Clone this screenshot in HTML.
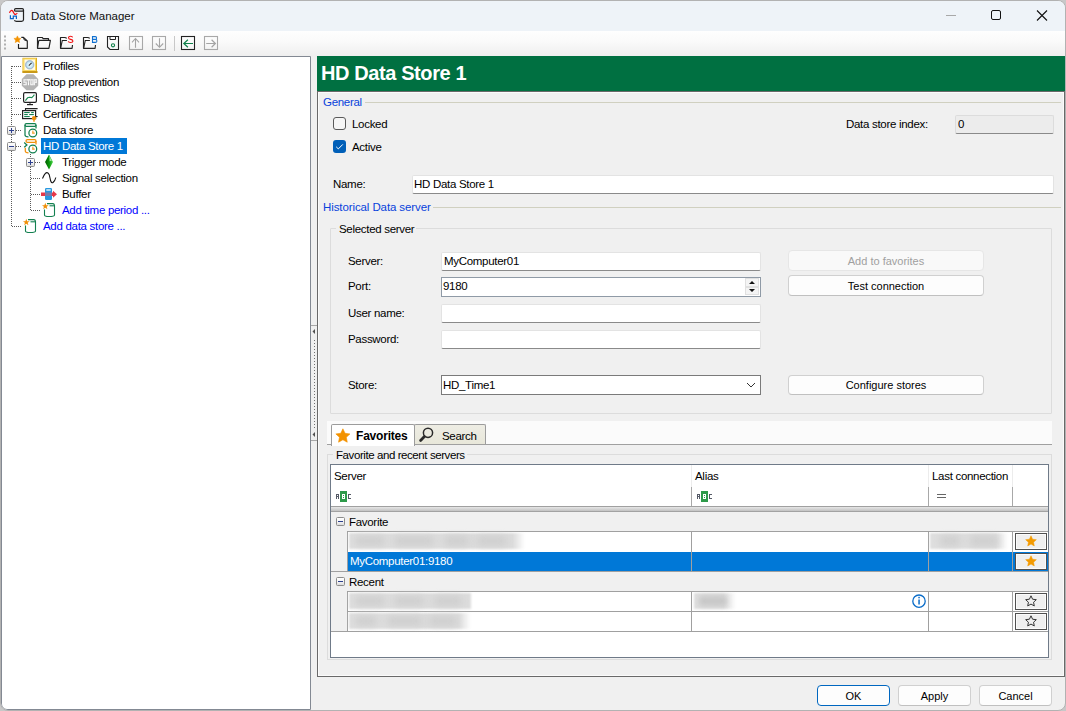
<!DOCTYPE html>
<html><head><meta charset="utf-8">
<style>
*{box-sizing:border-box;margin:0;padding:0}
html,body{width:1066px;height:711px;overflow:hidden;background:#c8c8c8}
body{font-family:"Liberation Sans",sans-serif;font-size:11px;color:#000;position:relative}
.a{position:absolute}
svg{position:absolute;overflow:visible}
.t{position:absolute;white-space:nowrap;line-height:13px;font-size:11.5px;letter-spacing:-0.3px}
#win{position:absolute;left:0;top:0;width:1066px;height:711px;border:1px solid #b2b2b2;border-radius:8px;background:#f0f0f0;overflow:hidden}
#title{position:absolute;left:0;top:0;width:1064px;height:30px;background:#eef3f8}
#tb{position:absolute;left:0;top:30px;width:1064px;height:26px;background:linear-gradient(#fefefe,#fafafa 40%,#eeeeee)}
#tree{position:absolute;left:0;top:55px;width:310px;height:654px;background:#fff;border:1px solid #838993;border-radius:0 0 0 6px}
#green{position:absolute;left:316px;top:55px;width:748px;height:35px;background:#007041}
#rp{position:absolute;left:316px;top:90px;width:748px;height:586px;border:1px solid #696969;box-shadow:inset 0 0 0 1px #fbfbfb;background:#f0f0f0}
.tbx{position:absolute;background:#fff;border:1px solid #e3e3e3;border-bottom:1px solid #8a8a8a;border-radius:2px}
.btn{position:absolute;background:#fdfdfd;border:1px solid #d0d0d0;border-bottom-color:#c0c0c0;border-radius:4px;text-align:center;line-height:18px;font-size:11px}
.glbl{color:#0842dc}
.gline{position:absolute;height:1px;background:#d0d0c0}
</style></head>
<body>
<div id="win">
  <div id="title"></div>
  <div id="tb"></div>
  <div id="tree"></div>
  <div id="green"></div>
  <div id="rp"></div>
</div>
<!--TITLE-->
<svg style="left:0;top:0" width="1066" height="60">
  <!-- app icon -->
  <path d="M15.8 8.6 L22.2 8.6 Q23.5 8.6 23.5 9.9 Q23.5 11.2 22.2 11.2 L15.8 11.2 Q14.5 11.2 14.5 9.9 Q14.5 8.6 15.8 8.6 Z" fill="none" stroke="#222" stroke-width="1.2"/>
  <path d="M23.5 9.9 L23.5 19.8 Q23.5 21.3 21.5 21.3 L16.5 21.3 Q15 21.3 14.3 20.4" fill="none" stroke="#222" stroke-width="1.2"/>
  <path d="M9.4 12.8 Q10.6 10.2 11.8 10.4 Q12.8 10.6 13.8 13 Q14.6 14.8 15.6 14.4 Q16.5 14 17.3 13.2" fill="none" stroke="#f01010" stroke-width="1.2"/>
  <path d="M10.4 15.2 L10.4 18.7 L13.3 18.7 L13.3 16.2 L16.4 16.2 L16.4 18.9" fill="none" stroke="#0a64c8" stroke-width="1.2"/>
  <!-- window controls -->
  <rect x="946" y="15" width="10" height="1" fill="#a8a8a8"/>
  <rect x="991.5" y="10.5" width="9" height="9" rx="1.5" fill="none" stroke="#111" stroke-width="1"/>
  <path d="M1037 10.5 L1047 20.5 M1047 10.5 L1037 20.5" stroke="#111" stroke-width="1.1"/>
  <!-- toolbar grip -->
  <g fill="#b0b0b0"><rect x="4" y="35.5" width="2" height="2"/><rect x="4" y="39.5" width="2" height="2"/><rect x="4" y="43.5" width="2" height="2"/><rect x="4" y="47.5" width="2" height="2"/></g>
  <!-- new -->
  <path d="M18.5 44 L18.5 48.3 L27.3 48.3 L27.3 41 L23.5 37.3 L21.3 37.3" fill="none" stroke="#222" stroke-width="1.15" stroke-linejoin="round"/>
  <path d="M23.5 37.5 Q23.3 40.8 27 40.8" fill="none" stroke="#222" stroke-width="1"/>
  <path d="M17.40 35.90 L18.46 38.14 L20.92 38.45 L19.11 40.16 L19.58 42.59 L17.40 41.40 L15.22 42.59 L15.69 40.16 L13.88 38.45 L16.34 38.14 Z" fill="#f39200" stroke="#f39200" stroke-width="0.5" stroke-linejoin="round"/>
  <!-- open -->
  <path d="M38.8 40.3 L37.5 48.3 L37.5 37.5 L42.2 37.5 L43.2 38.6 L48.5 38.6 L48.5 40.2" fill="none" stroke="#222" stroke-width="1.15" stroke-linejoin="round"/>
  <path d="M38.9 40.3 L50.4 40.3 L48.9 48.3 L37.5 48.3" fill="none" stroke="#222" stroke-width="1.15" stroke-linejoin="round"/>
  <!-- folder S -->
  <path d="M66.6 38.5 Q66.3 37.5 64.5 37.5 L60.5 37.5 L60.5 48.3 L72.1 48.3 L72.5 45" fill="none" stroke="#222" stroke-width="1.15" stroke-linejoin="round"/>
  <path d="M66.9 40.5 L62.3 40.5 L60.7 47.8" fill="none" stroke="#222" stroke-width="1.1"/>
  <path d="M72.6 37.4 Q72.4 36.3 70.6 36.3 Q68.5 36.3 68.5 37.8 Q68.5 39.1 70.7 39.4 Q72.9 39.7 72.9 41.1 Q72.9 42.5 70.6 42.5 Q68.4 42.5 68.3 41.2" fill="none" stroke="#f01010" stroke-width="1.1"/>
  <!-- folder B -->
  <path d="M89.6 38.5 Q89.3 37.5 87.5 37.5 L83.5 37.5 L83.5 48.3 L95.1 48.3 L95.5 45" fill="none" stroke="#222" stroke-width="1.15" stroke-linejoin="round"/>
  <path d="M89.9 40.5 L85.3 40.5 L83.7 47.8" fill="none" stroke="#222" stroke-width="1.1"/>
  <path d="M92.5 36.6 L95.3 36.6 Q96.6 36.6 96.6 38 Q96.6 39.4 95.3 39.4 L92.5 39.4 M95.3 39.4 Q96.9 39.4 96.9 41 Q96.9 42.4 95.3 42.4 L92.5 42.4 L92.5 36.1" fill="none" stroke="#1070d0" stroke-width="1.1"/>
  <!-- save -->
  <path d="M107.5 36.5 L118.5 36.5 L118.5 49.5 L110 49.5 L107.5 47 Z" fill="none" stroke="#222" stroke-width="1.1"/>
  <path d="M110 36.5 L110 39.5 L115.5 39.5 L115.5 36.5" fill="none" stroke="#222" stroke-width="1"/>
  <circle cx="113" cy="45.3" r="1.6" fill="none" stroke="#10804a" stroke-width="1.1"/>
  <!-- up / down -->
  <rect x="129.5" y="36.5" width="13" height="13" fill="none" stroke="#a8a8a8" stroke-width="1.1"/>
  <path d="M135.5 38.5 L135.5 47.7 M132 42.3 L135.5 38.5 L139 42.3" fill="none" stroke="#a4a4a4" stroke-width="1.1"/>
  <rect x="152.5" y="36.5" width="13" height="13" fill="none" stroke="#a8a8a8" stroke-width="1.1"/>
  <path d="M159.5 38.2 L159.5 47.5 M155.8 43.5 L159.5 47.3 L163.2 43.5" fill="none" stroke="#a4a4a4" stroke-width="1.1"/>
  <rect x="174" y="36" width="1" height="15" fill="#c8c8c8"/>
  <rect x="181.5" y="36.5" width="13" height="13" fill="none" stroke="#222" stroke-width="1.1"/>
  <path d="M183.6 43.5 L193 43.5 M187.9 39.8 L183.8 43.5 L187.9 47.2" fill="none" stroke="#10804a" stroke-width="1.2"/>
  <rect x="204.5" y="36.5" width="13" height="13" fill="none" stroke="#a8a8a8" stroke-width="1.1"/>
  <path d="M206.2 43.5 L215.4 43.5 M211.6 39.8 L215.4 43.5 L211.6 47.2" fill="none" stroke="#a4a4a4" stroke-width="1.2"/>
</svg>
<div class="t" style="left:31px;top:9px;font-size:11.5px;line-height:14px;color:#111;letter-spacing:0">Data Store Manager</div>
<div class="t" style="left:321px;top:62px;font-size:20px;line-height:22px;font-weight:bold;color:#fff;letter-spacing:-0.4px">HD Data Store 1</div>
<!--TREE-->
<svg style="left:0;top:0" width="320" height="240">
  <g stroke="#5a5a5a" stroke-width="1" stroke-dasharray="1,1" fill="none">
    <path d="M11.5 66 L11.5 126 M11.5 135 L11.5 142 M11.5 151 L11.5 226.5"/>
    <path d="M12 66.5 L22 66.5 M12 82.5 L22 82.5 M12 98.5 L22 98.5 M12 114.5 L22 114.5 M16 130.5 L22 130.5 M16 146.5 L22 146.5 M12 226.5 L22 226.5"/>
    <path d="M30.5 154 L30.5 158 M30.5 167 L30.5 210.5"/>
    <path d="M35 162.5 L41 162.5 M31 178.5 L41 178.5 M31 194.5 L41 194.5 M31 210.5 L41 210.5"/>
  </g>
  <!-- expander boxes -->
  <defs><linearGradient id="eg" x1="0" y1="0" x2="0" y2="1"><stop offset="0" stop-color="#fff"/><stop offset="0.5" stop-color="#f4f4f4"/><stop offset="1" stop-color="#d8d8d8"/></linearGradient></defs>
  <g stroke="#8c8c8c" fill="url(#eg)">
    <rect x="7.5" y="126.5" width="8" height="8" rx="1"/>
    <rect x="7.5" y="142.5" width="8" height="8" rx="1"/>
    <rect x="26.5" y="158.5" width="8" height="8" rx="1"/>
  </g>
  <g stroke="#2d3f8e" stroke-width="1">
    <path d="M9 130.5 L14 130.5 M11.5 128 L11.5 133"/>
    <path d="M9 146.5 L14 146.5"/>
    <path d="M28 162.5 L33 162.5 M30.5 160 L30.5 165"/>
  </g>
  <!-- Profiles icon -->
  <defs><linearGradient id="gold" x1="0" y1="0" x2="1" y2="1"><stop offset="0" stop-color="#e8c040"/><stop offset="1" stop-color="#c89a10"/></linearGradient>
  <radialGradient id="dial"><stop offset="0" stop-color="#ffffff"/><stop offset="0.7" stop-color="#bfe4f4"/><stop offset="1" stop-color="#8aa6c4"/></radialGradient></defs>
  <rect x="22.5" y="57.8" width="14.5" height="15" fill="#e0b020"/>
  <rect x="23" y="58.3" width="13" height="13.5" fill="#f8d860"/>
  <rect x="24.5" y="59.5" width="10.5" height="10.5" fill="#fffbe8"/>
  <rect x="22.5" y="71" width="15" height="2" fill="#c89818"/>
  <circle cx="29.7" cy="64.8" r="4.3" fill="url(#dial)" stroke="#a8b4c8" stroke-width="0.7"/>
  <path d="M28.8 65.6 L31.6 62.9" stroke="#333" stroke-width="1.1"/>
  <!-- Stop icon -->
  <path d="M26.5 74.3 L33.5 74.3 L38.2 79 L38.2 85.8 L33.5 90.3 L26.5 90.3 L21.8 85.8 L21.8 79 Z" fill="#b4b4b4"/>
  <g fill="#fff"><rect x="23.50" y="79.20" width="1.1" height="1.25"/><rect x="24.55" y="79.20" width="1.1" height="1.25"/><rect x="25.60" y="79.20" width="1.1" height="1.25"/><rect x="23.50" y="80.40" width="1.1" height="1.25"/><rect x="23.50" y="81.60" width="1.1" height="1.25"/><rect x="24.55" y="81.60" width="1.1" height="1.25"/><rect x="25.60" y="81.60" width="1.1" height="1.25"/><rect x="25.60" y="82.80" width="1.1" height="1.25"/><rect x="23.50" y="84.00" width="1.1" height="1.25"/><rect x="24.55" y="84.00" width="1.1" height="1.25"/><rect x="25.60" y="84.00" width="1.1" height="1.25"/><rect x="26.90" y="79.20" width="1.1" height="1.25"/><rect x="27.95" y="79.20" width="1.1" height="1.25"/><rect x="29.00" y="79.20" width="1.1" height="1.25"/><rect x="27.95" y="80.40" width="1.1" height="1.25"/><rect x="27.95" y="81.60" width="1.1" height="1.25"/><rect x="27.95" y="82.80" width="1.1" height="1.25"/><rect x="27.95" y="84.00" width="1.1" height="1.25"/><rect x="30.30" y="79.20" width="1.1" height="1.25"/><rect x="31.35" y="79.20" width="1.1" height="1.25"/><rect x="32.40" y="79.20" width="1.1" height="1.25"/><rect x="30.30" y="80.40" width="1.1" height="1.25"/><rect x="32.40" y="80.40" width="1.1" height="1.25"/><rect x="30.30" y="81.60" width="1.1" height="1.25"/><rect x="32.40" y="81.60" width="1.1" height="1.25"/><rect x="30.30" y="82.80" width="1.1" height="1.25"/><rect x="32.40" y="82.80" width="1.1" height="1.25"/><rect x="30.30" y="84.00" width="1.1" height="1.25"/><rect x="31.35" y="84.00" width="1.1" height="1.25"/><rect x="32.40" y="84.00" width="1.1" height="1.25"/><rect x="33.70" y="79.20" width="1.1" height="1.25"/><rect x="34.75" y="79.20" width="1.1" height="1.25"/><rect x="35.80" y="79.20" width="1.1" height="1.25"/><rect x="33.70" y="80.40" width="1.1" height="1.25"/><rect x="35.80" y="80.40" width="1.1" height="1.25"/><rect x="33.70" y="81.60" width="1.1" height="1.25"/><rect x="34.75" y="81.60" width="1.1" height="1.25"/><rect x="35.80" y="81.60" width="1.1" height="1.25"/><rect x="33.70" y="82.80" width="1.1" height="1.25"/><rect x="33.70" y="84.00" width="1.1" height="1.25"/></g>
  <!-- Diagnostics icon -->
  <rect x="23.6" y="92.6" width="12.8" height="9.8" rx="1.4" fill="#fff" stroke="#222" stroke-width="1.2"/>
  <rect x="29.5" y="103" width="1" height="1.5" fill="#222"/>
  <rect x="27" y="104" width="6" height="1.2" fill="#222"/>
  <path d="M25.4 100.6 L27.6 97.8 L29.5 97.2 L31.8 97.6 L33 96.5 L34.4 94.6" fill="none" stroke="#1a8a50" stroke-width="1.1"/>
  <!-- Certificates icon -->
  <path d="M25.5 110.5 L25.5 108.6 L37.6 108.6" fill="none" stroke="#222" stroke-width="1.1"/>
  <rect x="22.6" y="110.6" width="13" height="8" fill="#fff" stroke="#222" stroke-width="1.2"/>
  <g fill="#138050"><rect x="24.2" y="112" width="5.5" height="1.1"/><rect x="31.2" y="112" width="2.6" height="1.1"/><rect x="24.2" y="114" width="3.6" height="1.1"/><rect x="29.2" y="114" width="4.6" height="1.1"/><rect x="24.2" y="116" width="5.5" height="1.1"/></g>
  <rect x="35.6" y="116" width="2" height="1.1" fill="#222"/>
  <circle cx="34" cy="118.2" r="2.1" fill="#f0900a"/><path d="M34 119 L34 121.8" stroke="#f0900a" stroke-width="1.4"/>
  <!-- Data store icon -->
  <g fill="none" stroke="#138050" stroke-width="1.25">
    <rect x="25" y="123.6" width="11" height="2.8" rx="1.4" ry="1.4"/>
    <path d="M36 125 L36 128.5"/>
    <path d="M25 125 L25 135 Q25 136.8 28.5 136.8"/>
    <circle cx="32.8" cy="133" r="3.9" fill="#fff"/>
  </g>
  <rect x="32.4" y="130.6" width="1" height="3" fill="#f0900a"/><rect x="32.4" y="132.6" width="2.4" height="1" fill="#f0900a"/>
  <!-- HD Data Store icon -->
  <g fill="none" stroke="#f0900a" stroke-width="1.25">
    <rect x="26" y="139.6" width="10" height="2.8" rx="1.4" ry="1.4"/>
    <path d="M36 141 L36 144.5"/>
    <path d="M25.3 147.8 L25.3 151 Q25.3 152.8 28.5 152.8"/>
  </g>
  <path d="M24.2 142.6 L26.9 144.9 L24.2 147.2" fill="none" stroke="#138050" stroke-width="1.25"/>
  <circle cx="32.8" cy="149" r="3.9" fill="#fff" stroke="#138050" stroke-width="1.25"/>
  <rect x="32.4" y="146.6" width="1" height="3" fill="#f0900a"/><rect x="32.4" y="148.6" width="2.4" height="1" fill="#f0900a"/>
  <!-- Trigger gem -->
  <defs><linearGradient id="gem" x1="0" y1="0" x2="1" y2="0"><stop offset="0" stop-color="#005a00"/><stop offset="0.55" stop-color="#0c9a0c"/><stop offset="1" stop-color="#50d850"/></linearGradient></defs>
  <path d="M49 154.5 L53 162 L49 169.5 L45 162 Z" fill="url(#gem)"/>
  <path d="M49.3 155.5 L51.8 160.8 L49.6 161.2 Z" fill="#c0f8c0" opacity="0.8"/>
  <!-- Signal sine -->
  <path d="M42.5 178.5 Q45.5 171 48 173 Q49.5 174 50 178 Q51 184 53 182.5 Q55 181 55.8 177.5" fill="none" stroke="#111" stroke-width="1.1"/>
  <!-- Buffer -->
  <rect x="45" y="188" width="7" height="12" rx="1.2" fill="#2898e0"/>
  <rect x="46.3" y="189.2" width="4.4" height="1.6" fill="#d8ecf8"/>
  <rect x="41" y="192.5" width="4" height="3.5" fill="#e83848"/>
  <rect x="45" y="192.5" width="7" height="3.5" fill="#7a7aa8"/>
  <path d="M52 192.5 L53 192.5 L53 190.8 L57 194.3 L53 197.8 L53 196 L52 196 Z" fill="#e83848"/>
  <!-- Add time period -->
  <g fill="none" stroke="#138050" stroke-width="1.1">
    <path d="M47 203.6 L53 203.6 Q54.5 203.8 54.5 205.5 L54.5 215 Q54.5 216.5 49 216.5 Q44.5 216.5 44.5 215 L44.5 209.5"/>
    <path d="M49.5 205.8 L54 205.8"/>
  </g>
  <path d="M45.3 202.8 L46.2 205.2 L48.6 205.3 L46.7 206.8 L47.4 209.2 L45.3 207.8 L43.2 209.2 L43.9 206.8 L42 205.3 L44.4 205.2 Z" fill="#f0900a"/>
  <!-- Add data store -->
  <g fill="none" stroke="#138050" stroke-width="1.1">
    <path d="M28 219.6 L34 219.6 Q35.5 219.8 35.5 221.5 L35.5 231 Q35.5 232.5 30 232.5 Q25.5 232.5 25.5 231 L25.5 225.5"/>
    <path d="M30.5 221.8 L35 221.8"/>
  </g>
  <path d="M26.3 218.8 L27.2 221.2 L29.6 221.3 L27.7 222.8 L28.4 225.2 L26.3 223.8 L24.2 225.2 L24.9 222.8 L23 221.3 L25.4 221.2 Z" fill="#f0900a"/>
</svg>
<div class="a" style="left:41px;top:138px;width:86px;height:16px;background:#0078d7"></div>
<div class="t" style="left:43px;top:60px">Profiles</div>
<div class="t" style="left:43px;top:76px">Stop prevention</div>
<div class="t" style="left:43px;top:92px">Diagnostics</div>
<div class="t" style="left:43px;top:108px">Certificates</div>
<div class="t" style="left:43px;top:124px">Data store</div>
<div class="t" style="left:43px;top:140px;color:#fff">HD Data Store 1</div>
<div class="t" style="left:62px;top:156px">Trigger mode</div>
<div class="t" style="left:62px;top:172px">Signal selection</div>
<div class="t" style="left:62px;top:188px">Buffer</div>
<div class="t" style="left:62px;top:204px;color:#0000ff">Add time period ...</div>
<div class="t" style="left:43px;top:220px;color:#0000ff">Add data store ...</div>
<!-- splitter -->
<div class="a" style="left:311px;top:325px;width:6px;height:1px;background:#a8a8a8"></div>
<div class="a" style="left:311px;top:440px;width:6px;height:1px;background:#a8a8a8"></div>
<svg style="left:311px;top:325px" width="6" height="116">
  <path d="M1.5 6.5 L4 4 L4 9 Z" fill="#505050"/>
  <path d="M1.5 109.5 L4 107 L4 112 Z" fill="#505050"/>
  <g fill="#707070">
<rect x="3" y="15" width="1" height="1"/><rect x="3" y="18" width="1" height="1"/><rect x="3" y="21" width="1" height="1"/><rect x="3" y="24" width="1" height="1"/><rect x="3" y="27" width="1" height="1"/><rect x="3" y="30" width="1" height="1"/><rect x="3" y="33" width="1" height="1"/><rect x="3" y="36" width="1" height="1"/><rect x="3" y="39" width="1" height="1"/><rect x="3" y="42" width="1" height="1"/><rect x="3" y="45" width="1" height="1"/><rect x="3" y="48" width="1" height="1"/><rect x="3" y="51" width="1" height="1"/><rect x="3" y="54" width="1" height="1"/><rect x="3" y="57" width="1" height="1"/><rect x="3" y="60" width="1" height="1"/><rect x="3" y="63" width="1" height="1"/><rect x="3" y="66" width="1" height="1"/><rect x="3" y="69" width="1" height="1"/><rect x="3" y="72" width="1" height="1"/><rect x="3" y="75" width="1" height="1"/><rect x="3" y="78" width="1" height="1"/><rect x="3" y="81" width="1" height="1"/><rect x="3" y="84" width="1" height="1"/><rect x="3" y="87" width="1" height="1"/><rect x="3" y="90" width="1" height="1"/><rect x="3" y="93" width="1" height="1"/><rect x="3" y="96" width="1" height="1"/><rect x="3" y="99" width="1" height="1"/><rect x="3" y="102" width="1" height="1"/></g></svg>

<!--GENERAL-->
<div class="t glbl" style="left:323px;top:96px">General</div>
<div class="gline" style="left:365px;top:102px;width:696px"></div>
<div class="a" style="left:333px;top:117px;width:13px;height:13px;border:1px solid #5a5a5a;border-radius:3px;background:#f6f6f6"></div>
<div class="t" style="left:352px;top:118px">Locked</div>
<div class="a" style="left:333px;top:140px;width:13px;height:13px;border-radius:3px;background:#005fb8"></div>
<svg style="left:333px;top:140px" width="13" height="13"><path d="M3.2 6.8 L5.3 8.9 L9.8 4.4" fill="none" stroke="#fff" stroke-width="1"/></svg>
<div class="t" style="left:352px;top:141px">Active</div>
<div class="t" style="left:846px;top:118px">Data store index:</div>
<div class="a" style="left:955px;top:115px;width:99px;height:19px;background:#ececec;border:1px solid #dcdcdc;border-bottom-color:#8a8a8a;border-radius:2px"></div>
<div class="t" style="left:958px;top:118px">0</div>
<div class="t" style="left:333px;top:178px">Name:</div>
<div class="tbx" style="left:412px;top:175px;width:642px;height:19px"></div>
<div class="t" style="left:414px;top:178px">HD Data Store 1</div>
<div class="t glbl" style="left:323px;top:201px;letter-spacing:-0.1px">Historical Data server</div>
<div class="gline" style="left:433px;top:207px;width:628px"></div>

<!--SERVER-->
<div class="a" style="left:330px;top:228px;width:722px;height:186px;border:1px solid #dcdcdc;border-radius:1px"></div>
<div class="a" style="left:336px;top:222px;width:80px;height:12px;background:#f0f0f0"></div>
<div class="t" style="left:339px;top:223px">Selected server</div>
<div class="t" style="left:348px;top:255px">Server:</div>
<div class="tbx" style="left:441px;top:252px;width:320px;height:19px"></div>
<div class="t" style="left:444px;top:255px">MyComputer01</div>
<div class="t" style="left:348px;top:280px">Port:</div>
<div class="a" style="left:441px;top:277px;width:320px;height:20px;background:#fff;border:1px solid #8f9aa6"></div>
<div class="t" style="left:443px;top:280px">9180</div>
<div class="a" style="left:745px;top:278px;width:14px;height:9px;background:#f4f4f4;border:1px solid #e0e0e0"></div>
<div class="a" style="left:745px;top:287px;width:14px;height:8px;background:#f4f4f4;border:1px solid #e0e0e0"></div>
<svg style="left:745px;top:278px" width="14" height="18"><path d="M4 6 L7 3 L10 6 Z M4 11 L10 11 L7 14 Z" fill="#111"/></svg>
<div class="t" style="left:348px;top:307px">User name:</div>
<div class="tbx" style="left:441px;top:304px;width:320px;height:19px"></div>
<div class="t" style="left:348px;top:333px">Password:</div>
<div class="tbx" style="left:441px;top:330px;width:320px;height:19px"></div>
<div class="t" style="left:348px;top:379px">Store:</div>
<div class="a" style="left:441px;top:375px;width:320px;height:20px;background:#fff;border:1px solid #7a7a7a"></div>
<div class="t" style="left:443px;top:379px">HD_Time1</div>
<svg style="left:745px;top:380px" width="12" height="10"><path d="M2 3 L6 7 L10 3" fill="none" stroke="#333" stroke-width="1"/></svg>
<div class="btn" style="left:788px;top:250px;width:196px;height:21px;color:#a0a0a0;background:#f9f9f9;border-color:#e6e6e6;line-height:19px;padding-top:1px">Add to favorites</div>
<div class="btn" style="left:788px;top:275px;width:196px;height:21px;line-height:19px;padding-top:1px">Test connection</div>
<div class="btn" style="left:788px;top:375px;width:196px;height:20px">Configure stores</div>

<!--GRID-->
<!-- tab strip -->
<div class="a" style="left:327px;top:421px;width:725px;height:23px;background:#fbfbfb"></div>
<div class="a" style="left:327px;top:444px;width:725px;height:1px;background:#a0a0a0"></div>
<div class="a" style="left:414px;top:424px;width:72px;height:20px;background:linear-gradient(#eeede4,#e8e7da);border:1px solid #9c9c9c;border-bottom:none;border-radius:2px 2px 0 0"></div>
<div class="a" style="left:331px;top:424px;width:84px;height:22px;background:#fff;border:1px solid #9c9c9c;border-bottom:none;border-radius:2px 2px 0 0"></div>
<svg style="left:0;top:0" width="600" height="460">
  <path d="M342.90 428.80 L345.02 433.29 L349.94 433.91 L346.32 437.31 L347.25 442.19 L342.90 439.80 L338.55 442.19 L339.48 437.31 L335.86 433.91 L340.78 433.29 Z" fill="#f39200" stroke="#f39200" stroke-width="0.6" stroke-linejoin="round"/>
  <circle cx="428" cy="432.8" r="4.6" fill="none" stroke="#2a2a2a" stroke-width="1.5"/>
  <path d="M424.4 436.6 L420.6 440.4" stroke="#2a2a2a" stroke-width="2.8" stroke-linecap="round"/>
</svg>
<div class="t" style="left:356px;top:429px;font-weight:bold;font-size:12px;line-height:14px;letter-spacing:-0.2px">Favorites</div>
<div class="t" style="left:442px;top:430px">Search</div>
<!-- favorite and recent servers group -->
<div class="a" style="left:327px;top:454px;width:725px;height:206px;border:1px solid #dcdcdc"></div>
<div class="a" style="left:333px;top:448px;width:134px;height:12px;background:#f0f0f0"></div>
<div class="t" style="left:336px;top:449px;letter-spacing:-0.42px">Favorite and recent servers</div>
<!-- grid -->
<div class="a" style="left:330px;top:464px;width:719px;height:194px;background:#fff;border:1px solid #6f7a88"></div>
<!-- header dividers -->
<div class="a" style="left:691px;top:465px;width:1px;height:22px;background:#ececec"></div>
<div class="a" style="left:691px;top:487px;width:1px;height:19px;background:#a8a8a8"></div>
<div class="a" style="left:928px;top:465px;width:1px;height:22px;background:#ececec"></div>
<div class="a" style="left:928px;top:487px;width:1px;height:19px;background:#a8a8a8"></div>
<div class="a" style="left:1012px;top:465px;width:1px;height:22px;background:#ececec"></div>
<div class="a" style="left:1012px;top:487px;width:1px;height:19px;background:#a8a8a8"></div>
<div class="t" style="left:334px;top:470px">Server</div>
<div class="t" style="left:695px;top:470px">Alias</div>
<div class="t" style="left:932px;top:470px">Last connection</div>
<svg style="left:0;top:0" width="1066" height="711">
  <defs><g id="abc" shape-rendering="crispEdges">
    <path d="M0 0h3v1h-3z M0 1h1v4h-1z M2 1h1v4h-1z M1 2h1v1h-1z" fill="#555a66"/>
    <rect x="4" y="-3" width="7" height="11" fill="#2e9a4a"/>
    <rect x="6" y="0" width="3" height="5" fill="#fff"/>
    <rect x="7" y="1" width="1" height="1" fill="#2e9a4a"/><rect x="7" y="3" width="1" height="1" fill="#2e9a4a"/>
    <path d="M12 0h3v1h-3z M12 1h1v3h-1z M12 4h3v1h-3z" fill="#555a66"/>
  </g></defs>
  <use href="#abc" x="336" y="494"/>
  <use href="#abc" x="697" y="494"/>
  <path d="M937 494.5 L946 494.5 M937 497.5 L946 497.5" stroke="#666" stroke-width="1"/>
</svg>
<!-- header bottom band -->
<div class="a" style="left:331px;top:506px;width:717px;height:6px;background:linear-gradient(#a0a0a0 0,#a0a0a0 1px,#e6e6e6 1px,#c2c2c2 5px,#a2a2a2 5px,#a2a2a2 6px)"></div>
<!-- group rows -->
<div class="a" style="left:331px;top:512px;width:717px;height:120px;background:#f0f0f0"></div>
<div class="t" style="left:349px;top:516px">Favorite</div>
<div class="t" style="left:349px;top:576px">Recent</div>
<svg style="left:0;top:0" width="1066" height="711">
  <g stroke="#8c8c8c" fill="url(#eg)">
    <rect x="336.5" y="517.5" width="8" height="8" rx="1"/>
    <rect x="336.5" y="577.5" width="8" height="8" rx="1"/>
  </g>
  <path d="M338 521.5 L343 521.5 M338 581.5 L343 581.5" stroke="#2d3f8e"/>
</svg>
<!-- data rows -->
<div class="a" style="left:347px;top:531px;width:701px;height:41px;background:#fff;border-top:1px solid #a0a0a0;border-left:1px solid #a0a0a0"></div>
<div class="a" style="left:331px;top:571px;width:717px;height:1px;background:#a0a0a0"></div>
<div class="a" style="left:347px;top:591px;width:701px;height:41px;background:#fff;border-top:1px solid #a0a0a0;border-left:1px solid #a0a0a0"></div>
<div class="a" style="left:347px;top:611px;width:701px;height:1px;background:#a0a0a0"></div>
<div class="a" style="left:331px;top:631px;width:717px;height:1px;background:#a0a0a0"></div>
<div class="a" style="left:348px;top:551px;width:700px;height:1px;background:#fff"></div><div class="a" style="left:691px;top:551px;width:1px;height:1px;background:#a0a0a0"></div><div class="a" style="left:928px;top:551px;width:1px;height:1px;background:#a0a0a0"></div><div class="a" style="left:1012px;top:551px;width:1px;height:1px;background:#a0a0a0"></div>
<div class="a" style="left:348px;top:552px;width:700px;height:19px;background:#0078d7"></div>
<!-- column lines in data rows -->
<div class="a" style="left:691px;top:531px;width:1px;height:40px;background:#a0a0a0"></div>
<div class="a" style="left:928px;top:531px;width:1px;height:40px;background:#a0a0a0"></div>
<div class="a" style="left:1012px;top:531px;width:1px;height:40px;background:#a0a0a0"></div>
<div class="a" style="left:691px;top:591px;width:1px;height:40px;background:#a0a0a0"></div>
<div class="a" style="left:928px;top:591px;width:1px;height:40px;background:#a0a0a0"></div>
<div class="a" style="left:1012px;top:591px;width:1px;height:40px;background:#a0a0a0"></div>
<div class="t" style="left:350px;top:555px;color:#fff">MyComputer01:9180</div>
<!-- blurred text -->
<div class="a" style="left:349px;top:533px;width:176px;height:16px;background:linear-gradient(90deg,#dedede 0,#dcdcdc 164px,rgba(255,255,255,0) 100%);filter:blur(1px)"></div>
<div class="a" style="left:355px;top:536px;width:30px;height:10px;background:#d0d0d0;border-radius:4px;filter:blur(3px)"></div>
<div class="a" style="left:394px;top:536px;width:40px;height:10px;background:#d0d0d0;border-radius:4px;filter:blur(3px)"></div>
<div class="a" style="left:444px;top:536px;width:25px;height:10px;background:#d0d0d0;border-radius:4px;filter:blur(3px)"></div>
<div class="a" style="left:477px;top:536px;width:30px;height:10px;background:#d0d0d0;border-radius:4px;filter:blur(3px)"></div>
<div class="a" style="left:930px;top:533px;width:78px;height:16px;background:linear-gradient(90deg,#dedede 0,#dcdcdc 66px,rgba(255,255,255,0) 100%);filter:blur(1px)"></div>
<div class="a" style="left:940px;top:536px;width:20px;height:10px;background:#d0d0d0;border-radius:4px;filter:blur(3px)"></div>
<div class="a" style="left:970px;top:536px;width:28px;height:10px;background:#d0d0d0;border-radius:4px;filter:blur(3px)"></div>
<div class="a" style="left:349px;top:593px;width:122px;height:16px;background:linear-gradient(90deg,#dedede 0,#dcdcdc 122px,#dcdcdc 100%);filter:blur(1px)"></div>
<div class="a" style="left:355px;top:596px;width:30px;height:10px;background:#d0d0d0;border-radius:4px;filter:blur(3px)"></div>
<div class="a" style="left:394px;top:596px;width:30px;height:10px;background:#d0d0d0;border-radius:4px;filter:blur(3px)"></div>
<div class="a" style="left:434px;top:596px;width:28px;height:10px;background:#d0d0d0;border-radius:4px;filter:blur(3px)"></div>
<div class="a" style="left:694px;top:593px;width:42px;height:16px;background:linear-gradient(90deg,#dedede 0,#dcdcdc 30px,rgba(255,255,255,0) 100%);filter:blur(1px)"></div>
<div class="a" style="left:699px;top:596px;width:28px;height:10px;background:#c8c8c8;border-radius:4px;filter:blur(2.5px)"></div>
<div class="a" style="left:349px;top:613px;width:122px;height:16px;background:linear-gradient(90deg,#dedede 0,#dcdcdc 110px,rgba(255,255,255,0) 100%);filter:blur(1px)"></div>
<div class="a" style="left:355px;top:616px;width:22px;height:10px;background:#d0d0d0;border-radius:4px;filter:blur(3px)"></div>
<div class="a" style="left:387px;top:616px;width:35px;height:10px;background:#d0d0d0;border-radius:4px;filter:blur(3px)"></div>
<div class="a" style="left:429px;top:616px;width:28px;height:10px;background:#d0d0d0;border-radius:4px;filter:blur(3px)"></div>
<!-- star buttons -->
<div class="a" style="left:1015px;top:533px;width:32px;height:17px;background:#efefef;border:1px solid #505050;box-shadow:inset 0 0 0 1px #fbfbfb"></div>
<div class="a" style="left:1015px;top:553px;width:32px;height:17px;background:#efefef;border:1px solid #505050;box-shadow:inset 0 0 0 1px #fbfbfb"></div>
<div class="a" style="left:1015px;top:593px;width:32px;height:17px;background:#efefef;border:1px solid #505050;box-shadow:inset 0 0 0 1px #fbfbfb"></div>
<div class="a" style="left:1015px;top:613px;width:32px;height:17px;background:#efefef;border:1px solid #505050;box-shadow:inset 0 0 0 1px #fbfbfb"></div>
<svg style="left:0;top:0" width="1066" height="711">
  <defs><path id="st" d="M0.00 -5.00 L1.59 -1.58 L5.33 -1.13 L2.57 1.43 L3.29 5.13 L0.00 3.30 L-3.29 5.13 L-2.57 1.43 L-5.33 -1.13 L-1.59 -1.58 Z" stroke-linejoin="round"/></defs>
  <use href="#st" x="1031" y="540.8" fill="#f39a00" stroke="#f39a00" stroke-width="0.5"/>
  <use href="#st" x="1031" y="560.8" fill="#f39a00" stroke="#f39a00" stroke-width="0.5"/>
  <use href="#st" x="1031" y="600.8" fill="none" stroke="#333" stroke-width="1"/>
  <use href="#st" x="1031" y="620.8" fill="none" stroke="#333" stroke-width="1"/>
  <circle cx="919" cy="601.2" r="6.2" fill="none" stroke="#0a6cc8" stroke-width="1.3"/>
  <rect x="918.3" y="599.5" width="1.5" height="5" fill="#0a6cc8"/>
  <rect x="918.3" y="596.8" width="1.5" height="1.5" fill="#0a6cc8"/>
</svg>

<!--BUTTONS-->
<div class="btn" style="left:817px;top:685px;width:73px;height:21px;border:1px solid #0067c0;line-height:19px;padding-top:1px">OK</div>
<div class="btn" style="left:898px;top:685px;width:73px;height:21px;line-height:19px;padding-top:1px">Apply</div>
<div class="btn" style="left:979px;top:685px;width:73px;height:21px;line-height:19px;padding-top:1px">Cancel</div>

</body></html>
